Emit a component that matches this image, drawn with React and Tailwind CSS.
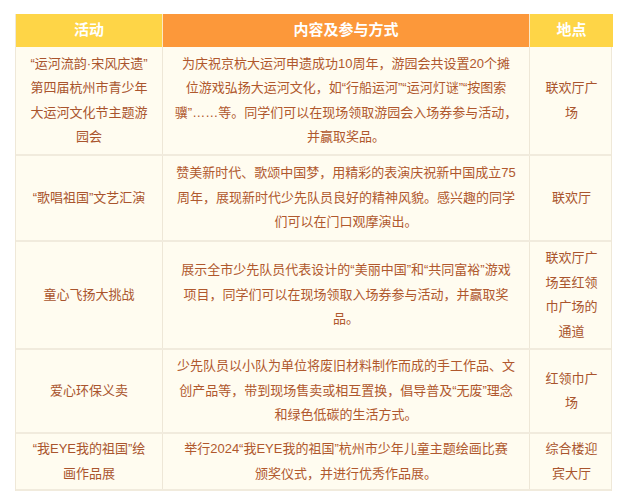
const rows = [
  {
    h: 'h-[109px]',
    activity: ['“运河流韵·宋风庆遗”', '第四届杭州市青少年', '大运河文化节主题游', '园会'],
    content: [
      '为庆祝京杭大运河申遗成功10周年，游园会共设置20个摊',
      '位游戏弘扬大运河文化，如“行船运河”“运河灯谜”“按图索',
      '骥”……等。同学们可以在现场领取游园会入场券参与活动，',
      '并赢取奖品。',
    ],
    place: ['联欢厅广', '场'],
  },
  {
    h: 'h-[86px]',
    activity: ['“歌唱祖国”文艺汇演'],
    content: [
      '赞美新时代、歌颂中国梦，用精彩的表演庆祝新中国成立75',
      '周年，展现新时代少先队员良好的精神风貌。感兴趣的同学',
      '们可以在门口观摩演出。',
    ],
    place: ['联欢厅'],
  },
  {
    h: 'h-[108px]',
    activity: ['童心飞扬大挑战'],
    content: [
      '展示全市少先队员代表设计的“美丽中国”和“共同富裕”游戏',
      '项目，同学们可以在现场领取入场券参与活动，并赢取奖',
      '品。',
    ],
    place: ['联欢厅广', '场至红领', '巾广场的', '通道'],
  },
  {
    h: 'h-[84px]',
    activity: ['爱心环保义卖'],
    content: [
      '少先队员以小队为单位将废旧材料制作而成的手工作品、文',
      '创产品等，带到现场售卖或相互置换，倡导普及“无废”理念',
      '和绿色低碳的生活方式。',
    ],
    place: ['红领巾广', '场'],
  },
  {
    h: 'h-[57px]',
    activity: ['“我EYE我的祖国”绘', '画作品展'],
    content: [
      '举行2024“我EYE我的祖国”杭州市少年儿童主题绘画比赛',
      '颁奖仪式，并进行优秀作品展。',
    ],
    place: ['综合楼迎', '宾大厅'],
  },
];

function Lines({ lines }) {
  return (
    <div className="leading-[24.5px]">
      {lines.map((l, i) => (
        <div key={i} className="whitespace-nowrap">{l}</div>
      ))}
    </div>
  );
}

export default function App() {
  return (
    <div
      className="w-[628px] h-[500px] bg-white pt-[14px] pl-[15px]"
      style={{ fontFamily: '"Liberation Sans", "Noto Sans CJK SC", sans-serif' }}
    >
      <div className="w-[597px] border-x border-[#efe8d8]">
        <div className="grid grid-cols-[146px_1px_366px_1px_83px] h-[33px] text-white font-bold text-[15px]">
          <div className="bg-[#fed547] flex items-center justify-center">活动</div>
          <div className="bg-[#fbe9c4]" />
          <div className="bg-[#fc983a] flex items-center justify-center">内容及参与方式</div>
          <div className="bg-[#fbe9c4]" />
          <div className="bg-[#fed547] flex items-center justify-center">地点</div>
        </div>
        {rows.map((r, i) => (
          <div
            key={i}
            className={`grid grid-cols-[146px_1px_366px_1px_83px] ${r.h} bg-[#fffcf0] text-[13px] text-[#a9542d] text-center border-b-2 border-[#f1ebdd]`}
          >
            <div className="flex items-center justify-center">
              <Lines lines={r.activity} />
            </div>
            <div className="bg-[#eee7d7]" />
            <div className="flex items-center justify-center text-[#b0582d]">
              <Lines lines={r.content} />
            </div>
            <div className="bg-[#eee7d7]" />
            <div className="flex items-center justify-center">
              <Lines lines={r.place} />
            </div>
          </div>
        ))}
      </div>
    </div>
  );
}
